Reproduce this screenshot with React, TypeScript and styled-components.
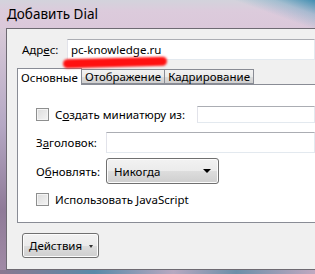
import React from "react";
import styled, { createGlobalStyle } from "styled-components";

const GlobalStyle = createGlobalStyle`
  html, body {
    margin: 0;
    padding: 0;
    background: #f0f0f0;
  }
  body {
    font-family: "Noto Sans", "Open Sans", sans-serif;
    font-size: 11.5px;
    color: #000;
  }
`;

const Window = styled.div`
  width: 315px;
  height: 274px;
  overflow: hidden;
  display: flex;
  flex-direction: column;
  background: #cdb9cf;
`;

const TitleBar = styled.div`
  height: 28px;
  flex: none;
  display: flex;
  align-items: center;
  padding-left: 7px;
  font-size: 13.5px;
  color: #000;
  background:
    linear-gradient(200deg, rgba(40, 130, 170, 0.85) 0px, rgba(90, 160, 190, 0.4) 14px, rgba(255, 255, 255, 0) 28px),
    linear-gradient(180deg, #d3d3dc 0%, #dccbdc 40%, #dbc8da 100%);
`;

const Body = styled.div`
  flex: 1;
  display: flex;
  min-height: 0;
`;

const SideFrame = styled.div`
  width: 6px;
  flex: none;
  background: linear-gradient(180deg, #d8cad8 0%, #b5a8c4 40%, #8f7b98 75%, #a08aa5 100%);
`;

const Client = styled.div`
  flex: 1;
  background: #f0f0f0;
  border-top: 1px solid #6e6a72;
  border-left: 1px solid #6e6a72;
  border-bottom: 1px solid #6e6a72;
  display: flex;
  flex-direction: column;
  padding-left: 10px;
  position: relative;
`;

const BottomFrame = styled.div`
  height: 4px;
  flex: none;
  background: linear-gradient(90deg, #8a7890 0%, #5a8aa8 30%, #b8a8c0 55%, #6d8fa8 75%, #c0a8c0 100%);
`;

const AddressRow = styled.div`
  display: flex;
  align-items: center;
  margin-top: 10px;
  height: 21px;
`;

const AddressLabel = styled.label`
  width: 45px;
  padding-left: 5px;
  flex: none;
`;

const TextField = styled.div<{ $h: number }>`
  flex: 1;
  height: ${(p) => p.$h}px;
  box-sizing: border-box;
  background: #fff;
  border: 1px solid #e3e9ef;
  border-top-color: #abadb3;
  border-left-color: #e2e3ea;
  display: flex;
  align-items: center;
  padding-left: 3px;
  white-space: nowrap;
`;

const Underline = styled.span`
  text-decoration: underline;
`;

const TabRow = styled.div`
  display: flex;
  align-items: flex-end;
  margin-top: 8px;
  height: 17px;
  position: relative;
  z-index: 1;
`;

const Tab = styled.div<{ $active?: boolean }>`
  box-sizing: border-box;
  height: ${(p) => (p.$active ? 17 : 15)}px;
  padding: 0 3px;
  display: flex;
  align-items: center;
  border: 1px solid #898c95;
  border-bottom: ${(p) => (p.$active ? "none" : "1px solid #898c95")};
  margin-left: ${(p) => (p.$active ? 0 : -1)}px;
  background: ${(p) =>
    p.$active ? "#fff" : "linear-gradient(180deg, #f2f2f2 0%, #ebebeb 50%, #dddddd 51%, #cfcfcf 100%)"};
  white-space: nowrap;
  margin-bottom: ${(p) => (p.$active ? 0 : 1)}px;
`;

const Panel = styled.div`
  margin-top: -1px;
  height: 139px;
  box-sizing: border-box;
  background: #fff;
  border: 1px solid #898c95;
  border-right: none;
  display: flex;
  flex-direction: column;
  padding: 21px 0 0 18px;
`;

const CheckRow = styled.div<{ $mt: number }>`
  display: flex;
  align-items: center;
  height: 17px;
  margin-top: ${(p) => p.$mt}px;
`;

const Checkbox = styled.span`
  width: 13px;
  height: 13px;
  box-sizing: border-box;
  border: 1px solid #8e8f8f;
  background: linear-gradient(135deg, #dcdcdc 0%, #f4f4f4 100%);
  box-shadow: inset 0 0 0 1px #f4f4f4;
  flex: none;
  margin-right: 6px;
`;

const CheckText = styled.span`
  white-space: nowrap;
  margin-right: 12px;
`;

const FieldRow = styled.div<{ $mt: number; $h: number }>`
  display: flex;
  align-items: center;
  height: ${(p) => p.$h}px;
  margin-top: ${(p) => p.$mt}px;
`;

const FieldLabel = styled.span`
  width: 70px;
  flex: none;
  white-space: nowrap;
`;

const Select = styled.div`
  width: 113px;
  height: 26px;
  box-sizing: border-box;
  border: 1px solid #707070;
  border-radius: 3px;
  background: linear-gradient(180deg, #f2f2f2 0%, #ebebeb 50%, #dddddd 51%, #cfcfcf 100%);
  box-shadow: inset 0 0 0 1px #fcfcfc;
  display: flex;
  align-items: center;
  justify-content: space-between;
  padding: 0 7px 0 7px;
`;

const Arrow = styled.span<{ $size: number }>`
  width: 0;
  height: 0;
  border-left: ${(p) => p.$size}px solid transparent;
  border-right: ${(p) => p.$size}px solid transparent;
  border-top: ${(p) => p.$size}px solid #000;
`;

const Footer = styled.div`
  flex: 1;
  display: flex;
  align-items: flex-start;
  padding: 10px 0 0 5px;
`;

const Button = styled.div`
  width: 77px;
  height: 25px;
  box-sizing: border-box;
  border: 1px solid #707070;
  border-radius: 3px;
  background: linear-gradient(180deg, #f2f2f2 0%, #ebebeb 50%, #dddddd 51%, #cfcfcf 100%);
  box-shadow: inset 0 0 0 1px #fcfcfc;
  display: flex;
  align-items: center;
  padding-left: 6px;
  gap: 7px;
`;

const SmallArrow = styled.span`
  width: 0;
  height: 0;
  border-left: 2px solid transparent;
  border-right: 2px solid transparent;
  border-top: 3px solid #333;
  margin-top: 1px;
`;

const RedMark = styled.div`
  position: absolute;
  left: 56px;
  top: 29px;
  width: 104px;
  height: 9px;
  border-radius: 5px;
  background: #ff1010;
  filter: blur(1px);
  transform: rotate(-1.5deg);
  z-index: 2;
`;

export default function App() {
  return (
    <>
      <GlobalStyle />
      <Window>
        <TitleBar>Добавить Dial</TitleBar>
        <Body>
          <SideFrame />
          <Client>
            <AddressRow>
              <AddressLabel>
                Адр<Underline>е</Underline>с:
              </AddressLabel>
              <TextField $h={21}>pc-knowledge.ru</TextField>
            </AddressRow>
            <RedMark />
            <TabRow>
              <Tab $active>Основные</Tab>
              <Tab>Отображение</Tab>
              <Tab>Кадрирование</Tab>
            </TabRow>
            <Panel>
              <CheckRow $mt={0}>
                <Checkbox />
                <CheckText>
                  С<Underline>о</Underline>здать миниатюру из:
                </CheckText>
                <TextField $h={17} />
              </CheckRow>
              <FieldRow $mt={9} $h={21}>
                <FieldLabel>
                  З<Underline>а</Underline>головок:
                </FieldLabel>
                <TextField $h={21} />
              </FieldRow>
              <FieldRow $mt={5} $h={26}>
                <FieldLabel>
                  О<Underline>б</Underline>новлять:
                </FieldLabel>
                <Select>
                  Никогда
                  <Arrow $size={4} />
                </Select>
              </FieldRow>
              <CheckRow $mt={7}>
                <Checkbox />
                <CheckText>
                  Использовать <Underline>J</Underline>avaScript
                </CheckText>
              </CheckRow>
            </Panel>
            <Footer>
              <Button>
                Действия
                <SmallArrow />
              </Button>
            </Footer>
          </Client>
        </Body>
        <BottomFrame />
      </Window>
    </>
  );
}
